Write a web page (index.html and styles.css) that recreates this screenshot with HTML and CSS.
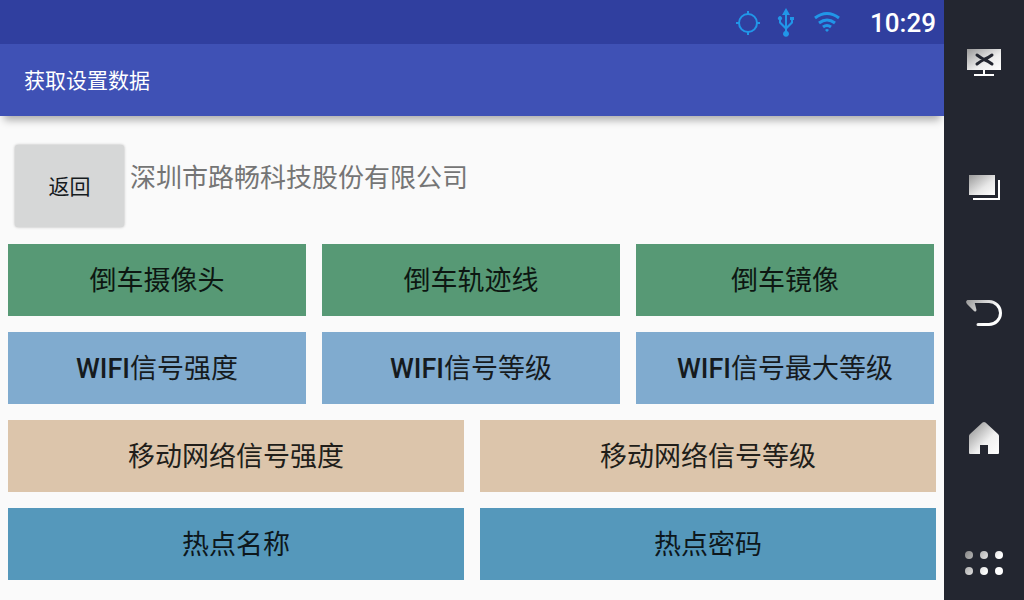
FILE: index.html
```html
<!DOCTYPE html>
<html lang="zh-CN">
<head>
<meta charset="utf-8">
<meta name="viewport" content="width=device-width, initial-scale=1">
<title>获取设置数据</title>
<link rel="stylesheet" href="styles.css">
</head>
<body>
<div class="screen">
  <div class="app">
    <div class="status-bar">
      <svg class="status-icons" width="110" height="44" viewBox="0 0 110 44" aria-hidden="true">
        <g class="status-stroke">
          <circle cx="14" cy="23" r="9"/>
          <path d="M14 11v4M14 31v4M2 23h4M22 23h4"/>
        </g>
        <path class="status-fill" d="M52 8l4 7h-3v11l4-4v-2h-1v-3h4v3h-1v3l-6 6v2a3 3 0 1 1-2 0v-2l-6-6v-3a2 2 0 1 1 2 0v2l4 4V15h-3z"/>
        <path class="wifi-arcs" d="M81 18q12-9 24 0M85 23q8-6 16 0M89 27q4-3 8 0"/>
        <path class="status-fill" d="M91 30q2-2 4 0l-2 2z"/>
      </svg>
      <time class="clock">10:29</time>
    </div>
    <header class="title-bar"><h1 class="title">获取设置数据</h1></header>
    <main class="content">
      <div class="intro">
        <button class="back" type="button">返回</button>
        <p class="company">深圳市路畅科技股份有限公司</p>
      </div>
      <div class="row row-three">
        <button class="tile green" type="button">倒车摄像头</button>
        <button class="tile green" type="button">倒车轨迹线</button>
        <button class="tile green" type="button">倒车镜像</button>
      </div>
      <div class="row row-three">
        <button class="tile sky" type="button"><span class="latin">WIFI</span>信号强度</button>
        <button class="tile sky" type="button"><span class="latin">WIFI</span>信号等级</button>
        <button class="tile sky" type="button"><span class="latin">WIFI</span>信号最大等级</button>
      </div>
      <div class="row">
        <button class="tile sand" type="button">移动网络信号强度</button>
        <button class="tile sand" type="button">移动网络信号等级</button>
      </div>
      <div class="row">
        <button class="tile blue" type="button">热点名称</button>
        <button class="tile blue" type="button">热点密码</button>
      </div>
    </main>
  </div>
  <nav class="side" aria-label="系统导航">
    <button class="nav-button" type="button" aria-label="关闭屏幕">
      <svg width="80" height="60" viewBox="0 0 80 60">
        <defs>
          <linearGradient id="screen-shade" x1="0" y1="0" x2="1" y2="1"><stop offset="0" stop-color="#999"/><stop offset=".6" stop-color="#eee"/><stop offset="1" stop-color="#fff"/></linearGradient>
        </defs>
        <path fill="url(#screen-shade)" d="M23 19h34v21H23z"/>
        <path fill="#fff" d="M39 40h2v4h9v2H30v-2h9z"/>
        <path class="cross" d="M33 25q4 3 7 4.500q4 1.500 8 4.500M48 25q-4 3-8 4.500q-3 1.500-7 4.500"/>
      </svg>
    </button>
    <button class="nav-button" type="button" aria-label="最近任务">
      <svg width="80" height="60" viewBox="0 0 80 60">
        <defs>
          <linearGradient id="window-shade" x1="0" y1="0" x2="1" y2="1"><stop offset="0" stop-color="#999"/><stop offset=".6" stop-color="#e8e8e8"/><stop offset="1" stop-color="#fff"/></linearGradient>
        </defs>
        <path fill="url(#window-shade)" d="M25 20h26v20H25z"/>
        <path fill="#fff" d="M54 25h2v20H29v-2h25z"/>
      </svg>
    </button>
    <button class="nav-button" type="button" aria-label="返回">
      <svg width="80" height="60" viewBox="0 0 80 60">
        <defs>
          <linearGradient id="back-shade" gradientUnits="userSpaceOnUse" x1="24" y1="18" x2="46" y2="36"><stop offset="0" stop-color="#999"/><stop offset="1" stop-color="#fff"/></linearGradient>
        </defs>
        <path fill="none" stroke="url(#back-shade)" stroke-width="3" stroke-linecap="round" d="M25 21.500H45a11.500 11.500 0 0 1 0 23H34"/>
        <path fill="url(#back-shade)" d="M23.500 20q-2.500 1-.5 4l7 7q2 1.500 2.500-1l-2-8V20z"/>
      </svg>
    </button>
    <button class="nav-button" type="button" aria-label="主页">
      <svg width="80" height="60" viewBox="0 0 80 60">
        <defs>
          <linearGradient id="home-shade" x1="0" y1="0" x2="1" y2="1"><stop offset=".1" stop-color="#999"/><stop offset=".6" stop-color="#f0f0f0"/><stop offset="1" stop-color="#fff"/></linearGradient>
        </defs>
        <path fill="url(#home-shade)" d="M38.500 17.500q1.500-1 3 0L54 29q1 1 1 2v17q0 1-1 1H44v-9h-8v9H26q-1 0-1-1V31q0-1 1-2z"/>
      </svg>
    </button>
    <button class="nav-button" type="button" aria-label="全部应用">
      <svg width="80" height="60" viewBox="0 0 80 60">
        <defs>
          <linearGradient id="dots-shade" gradientUnits="userSpaceOnUse" x1="22" y1="20" x2="45" y2="40"><stop offset="0" stop-color="#888"/><stop offset="1" stop-color="#fff"/></linearGradient>
        </defs>
        <g fill="url(#dots-shade)">
          <circle cx="25" cy="25" r="4"/><circle cx="40" cy="25" r="4"/><circle cx="55" cy="25" r="4"/>
          <circle cx="25" cy="41" r="4"/><circle cx="40" cy="41" r="4"/><circle cx="55" cy="41" r="4"/>
        </g>
      </svg>
    </button>
  </nav>
</div>
</body>
</html>
```
FILE: styles.css
```css
* {
  box-sizing: border-box;
}

body {
  margin: 0;
  background: #fafafa;
  color: #161b1e;
  font-family: Roboto, "Noto Sans CJK SC", sans-serif;
}

button {
  margin: 0;
  padding: 0;
  border: 0;
  color: inherit;
  font: inherit;
  cursor: pointer;
}

.screen {
  display: flex;
  min-height: 100vh;
}

.app {
  flex: 1;
  min-width: 0;
}

.status-bar {
  display: flex;
  align-items: center;
  justify-content: flex-end;
  gap: 26px;
  height: 44px;
  padding-right: 8px;
  background: #303f9f;
}

.status-icons {
  display: block;
}

.status-stroke {
  fill: none;
  stroke: #2196e8;
  stroke-width: 2;
}

.status-fill {
  fill: #2196e8;
}

.wifi-arcs {
  fill: none;
  stroke: #2196e8;
  stroke-width: 3;
}

.clock {
  padding-top: 2px;
  color: #fff;
  font-size: 26px;
  font-weight: 500;
  line-height: 42px;
}

.title-bar {
  display: flex;
  align-items: center;
  height: 72px;
  padding: 2px 24px 0;
  background: #3f51b5;
  box-shadow: 0 8px 8px -4px rgba(0, 0, 0, 0.32);
}

.title {
  margin: 0;
  color: #fff;
  font-size: 21px;
  font-weight: 400;
  line-height: 32px;
}

.content {
  display: flex;
  flex-direction: column;
  gap: 16px;
  padding: 28px 8px 20px;
}

.intro {
  display: flex;
  align-items: flex-start;
  gap: 6px;
  padding: 1px 7px 1px;
}

.back {
  width: 109px;
  height: 82px;
  padding-bottom: 3px;
  border-radius: 3px;
  background: #d6d7d7;
  box-shadow: 0 0 3px rgba(0, 0, 0, 0.3);
  font-size: 21px;
}

.company {
  margin: 0;
  padding-top: 13px;
  color: #757575;
  font-size: 26px;
  line-height: 40px;
}

.row {
  display: grid;
  grid-template-columns: repeat(2, 1fr);
  gap: 16px;
}

.row-three {
  grid-template-columns: repeat(3, 1fr);
  padding-right: 2px;
}

.tile {
  height: 72px;
  padding-bottom: 4px;
  font-size: 27px;
}

.latin {
  font-weight: 500;
}

.green {
  background: #579975;
  color: #0d1712;
}

.sky {
  background: #80abcf;
}

.sand {
  background: #dcc5ab;
  color: #211e1a;
}

.blue {
  background: #5598bb;
  color: #0d171c;
}

.side {
  display: flex;
  flex: 0 0 80px;
  flex-direction: column;
  justify-content: space-between;
  padding: 30px 0 10px;
  background: #232630;
}

.nav-button {
  height: 60px;
  background: transparent;
}

.nav-button svg {
  display: block;
}

.cross {
  fill: none;
  stroke: #232630;
  stroke-width: 3;
  stroke-linecap: round;
}
```
